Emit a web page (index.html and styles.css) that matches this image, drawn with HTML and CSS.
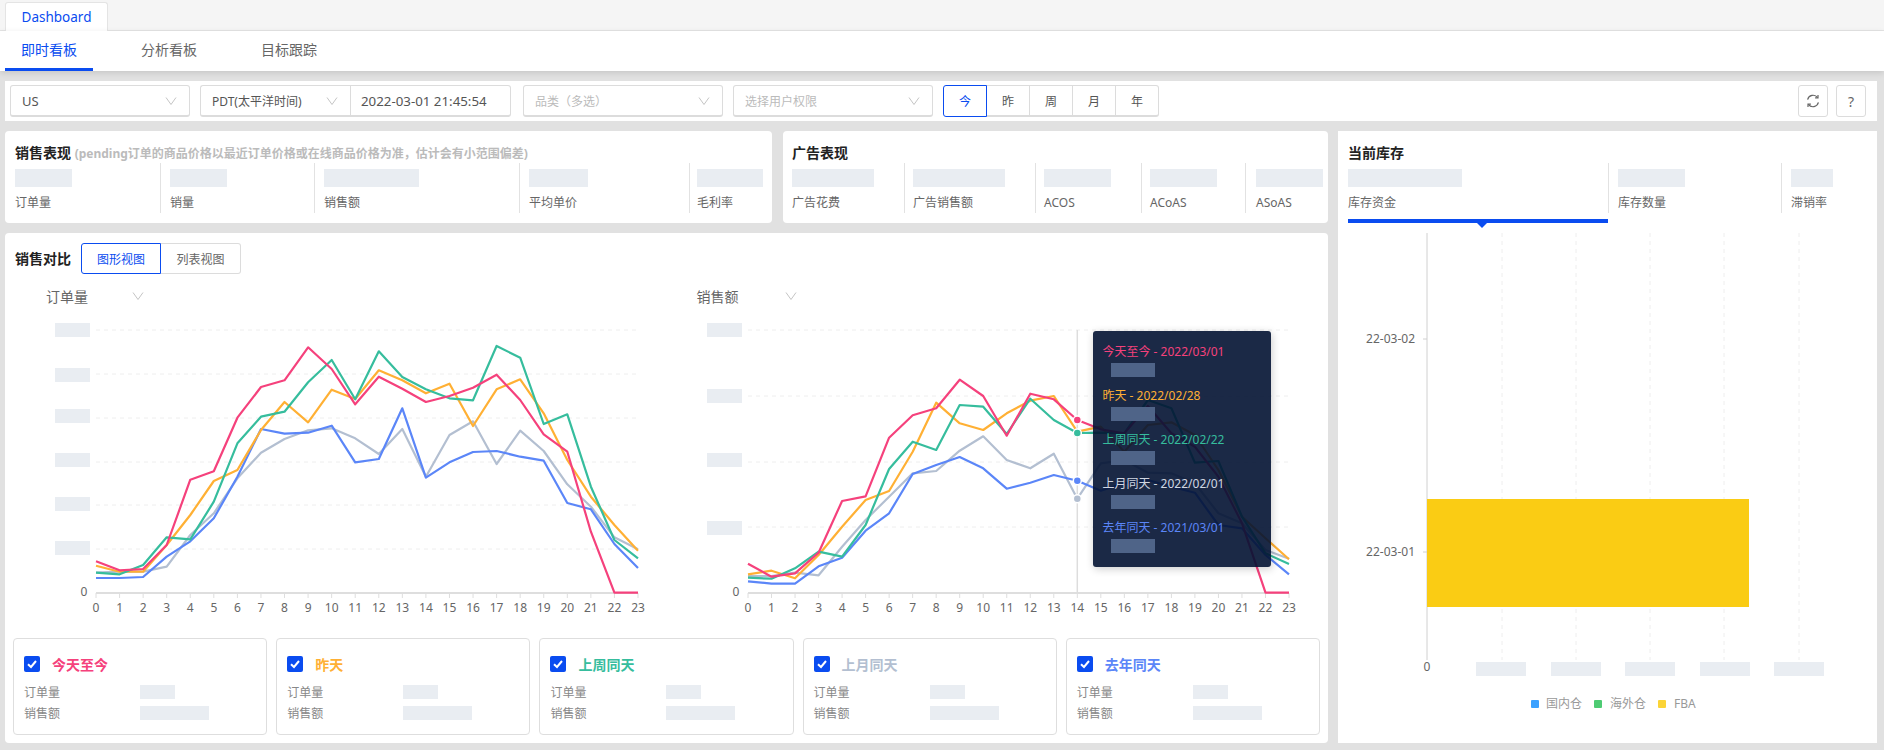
FILE: index.html
```html
<!DOCTYPE html>
<html lang="zh-CN">
<head>
  <meta charset="UTF-8" />
  <title>Dashboard</title>
  <link rel="stylesheet" href="styles.css">
</head>
<body>
  <div class="page-tabs">
    <div class="page-tab">Dashboard</div>
  </div>

  <nav class="board-tabs">
    <a class="board-tab active">即时看板</a>
    <a class="board-tab">分析看板</a>
    <a class="board-tab">目标跟踪</a>
  </nav>

  <div class="toolbar">
    <div class="select w-country">US<svg class="chevron" viewBox="0 0 12 8"><path d="M1 .5 6 7.5 11 .5"/></svg></div>
    <div class="date-group">
      <div class="select w-zone"><span class="small">PDT(太平洋时间)</span><svg class="chevron" viewBox="0 0 12 8"><path d="M1 .5 6 7.5 11 .5"/></svg></div>
      <div class="date-value">2022-03-01 21:45:54</div>
    </div>
    <div class="select w-filter placeholder">品类（多选）<svg class="chevron" viewBox="0 0 12 8"><path d="M1 .5 6 7.5 11 .5"/></svg></div>
    <div class="select w-filter placeholder">选择用户权限<svg class="chevron" viewBox="0 0 12 8"><path d="M1 .5 6 7.5 11 .5"/></svg></div>
    <div class="segments">
      <button class="segment active">今</button>
      <button class="segment">昨</button>
      <button class="segment">周</button>
      <button class="segment">月</button>
      <button class="segment">年</button>
    </div>
    <div class="tools">
      <button class="tool-btn" aria-label="刷新">
        <svg viewBox="0 0 14 14" width="14" height="14"><path d="M1.6 5.6A5.6 5.6 0 0 1 11.6 3.6M12.4 8.4A5.6 5.6 0 0 1 2.4 10.4"/><path d="M12 .9v2.9H9.1M2 13.1v-2.9h2.9"/></svg>
      </button>
      <button class="tool-btn">?</button>
    </div>
  </div>

  <main class="main">
    <div class="left-col">
      <div class="top-row">
        <section class="card sales-card">
          <h3 class="card-title">销售表现 <small>(pending订单的商品价格以最近订单价格或在线商品价格为准，估计会有小范围偏差)</small></h3>
          <div class="metrics sales-metrics">
            <div class="metric"><i class="blur" style="width:57px"></i><span>订单量</span></div>
            <div class="metric"><i class="blur" style="width:57px"></i><span>销量</span></div>
            <div class="metric"><i class="blur" style="width:95px"></i><span>销售额</span></div>
            <div class="metric"><i class="blur" style="width:59px"></i><span>平均单价</span></div>
            <div class="metric"><i class="blur" style="width:66px"></i><span>毛利率</span></div>
          </div>
        </section>
        <section class="card ads-card">
          <h3 class="card-title">广告表现</h3>
          <div class="metrics ads-metrics">
            <div class="metric"><i class="blur" style="width:82px"></i><span>广告花费</span></div>
            <div class="metric"><i class="blur" style="width:92px"></i><span>广告销售额</span></div>
            <div class="metric"><i class="blur" style="width:67px"></i><span>ACOS</span></div>
            <div class="metric"><i class="blur" style="width:67px"></i><span>ACoAS</span></div>
            <div class="metric"><i class="blur" style="width:67px"></i><span>ASoAS</span></div>
          </div>
        </section>
      </div>

      <section class="card compare-card">
        <div class="compare-head">
          <h3 class="card-title">销售对比</h3>
          <div class="view-switch">
            <button class="view-btn active">图形视图</button>
            <button class="view-btn">列表视图</button>
          </div>
        </div>

        <div class="charts">
          <div class="chart-pane orders-pane">
            <div class="chart-select">订单量<svg class="chevron" viewBox="0 0 12 8"><path d="M1 .5 6 7.5 11 .5"/></svg></div>
            <div class="chart-box" id="ordersChart"></div>
          </div>
          <div class="chart-pane revenue-pane">
            <div class="chart-select">销售额<svg class="chevron" viewBox="0 0 12 8"><path d="M1 .5 6 7.5 11 .5"/></svg></div>
            <div class="chart-box" id="revenueChart"></div>
            <div class="chart-tip">
              <div class="tip-row c-today">今天至今 - 2022/03/01<i></i></div>
              <div class="tip-row c-yesterday">昨天 - 2022/02/28<i></i></div>
              <div class="tip-row c-week">上周同天 - 2022/02/22<i></i></div>
              <div class="tip-row c-month">上月同天 - 2022/02/01<i></i></div>
              <div class="tip-row c-year">去年同天 - 2021/03/01<i></i></div>
            </div>
          </div>
        </div>

        <div class="legend-cards">
          <div class="legend-card">
            <div class="legend-name c-today"><span class="check"><svg viewBox="0 0 16 16"><path d="M4 8.2 7 11l5-6"/></svg></span>今天至今</div>
            <div class="legend-row"><span>订单量</span><i class="blur" style="width:35px"></i></div>
            <div class="legend-row"><span>销售额</span><i class="blur" style="width:69px"></i></div>
          </div>
          <div class="legend-card">
            <div class="legend-name c-yesterday"><span class="check"><svg viewBox="0 0 16 16"><path d="M4 8.2 7 11l5-6"/></svg></span>昨天</div>
            <div class="legend-row"><span>订单量</span><i class="blur" style="width:35px"></i></div>
            <div class="legend-row"><span>销售额</span><i class="blur" style="width:69px"></i></div>
          </div>
          <div class="legend-card">
            <div class="legend-name c-week"><span class="check"><svg viewBox="0 0 16 16"><path d="M4 8.2 7 11l5-6"/></svg></span>上周同天</div>
            <div class="legend-row"><span>订单量</span><i class="blur" style="width:35px"></i></div>
            <div class="legend-row"><span>销售额</span><i class="blur" style="width:69px"></i></div>
          </div>
          <div class="legend-card">
            <div class="legend-name c-month"><span class="check"><svg viewBox="0 0 16 16"><path d="M4 8.2 7 11l5-6"/></svg></span>上月同天</div>
            <div class="legend-row"><span>订单量</span><i class="blur" style="width:35px"></i></div>
            <div class="legend-row"><span>销售额</span><i class="blur" style="width:69px"></i></div>
          </div>
          <div class="legend-card">
            <div class="legend-name c-year"><span class="check"><svg viewBox="0 0 16 16"><path d="M4 8.2 7 11l5-6"/></svg></span>去年同天</div>
            <div class="legend-row"><span>订单量</span><i class="blur" style="width:35px"></i></div>
            <div class="legend-row"><span>销售额</span><i class="blur" style="width:69px"></i></div>
          </div>
        </div>
      </section>
    </div>

    <section class="card stock-card">
      <h3 class="card-title">当前库存</h3>
      <div class="metrics stock-metrics">
        <div class="metric"><i class="blur" style="width:114px"></i><span>库存资金</span></div>
        <div class="metric"><i class="blur" style="width:67px"></i><span>库存数量</span></div>
        <div class="metric"><i class="blur" style="width:42px"></i><span>滞销率</span></div>
      </div>
      <div class="stock-bar"></div>
      <svg class="stock-chart" viewBox="1338 228 539 515" width="539" height="515">
        <g class="v-grid">
          <path d="M1502 233V660M1576 233V660M1650 233V660M1724 233V660M1799 233V660"/>
        </g>
        <path class="y-axis" d="M1427 233V660M1423 339H1427M1423 552H1427"/>
        <rect x="1427" y="499" width="322" height="108" fill="#facc14"/>
        <text class="axis-text" x="1415" y="343" text-anchor="end">22-03-02</text>
        <text class="axis-text" x="1415" y="556" text-anchor="end">22-03-01</text>
        <text class="axis-text" x="1427" y="671" text-anchor="middle">0</text>
        <g fill="#e9edf2">
          <rect x="1476" y="662" width="50" height="14"/>
          <rect x="1551" y="662" width="50" height="14"/>
          <rect x="1625" y="662" width="50" height="14"/>
          <rect x="1700" y="662" width="50" height="14"/>
          <rect x="1774" y="662" width="50" height="14"/>
        </g>
        <rect x="1531" y="700" width="8" height="8" rx="1" fill="#3ba1ff"/>
        <text class="legend-text" x="1546" y="708">国内仓</text>
        <rect x="1594" y="700" width="8" height="8" rx="1" fill="#4ecb73"/>
        <text class="legend-text" x="1610" y="708">海外仓</text>
        <rect x="1658" y="700" width="8" height="8" rx="1" fill="#fbd437"/>
        <text class="legend-text" x="1674" y="708">FBA</text>
      </svg>
    </section>
  </main>

  <script src="charts.js"></script>
</body>
</html>
```

FILE: styles.css
```css
* {
  box-sizing: border-box;
}

body {
  margin: 0;
  background-color: #e1e1e1;
  color: #555;
  font-family: "Noto Sans", "Noto Sans CJK SC", sans-serif;
  font-size: 12px;
  width: 1884px;
  height: 750px;
  overflow: hidden;
}

button {
  font-family: inherit;
  cursor: pointer;
}

/* top tabs */
.page-tabs {
  height: 31px;
  padding: 2px 0 0 5px;
  background-color: #f5f5f5;
  border-bottom: 1px solid #e4e4e4;
}

.page-tab {
  width: 103px;
  height: 29px;
  line-height: 28px;
  text-align: center;
  font-size: 13.5px;
  color: #0a4cf0;
  background-color: #fff;
  border: 1px solid #e4e4e4;
  border-bottom: none;
  border-radius: 3px 3px 0 0;
}

.board-tabs {
  display: flex;
  height: 40px;
  padding-left: 5px;
  background-color: #fff;
  box-shadow: 0 2px 6px rgba(0, 0, 0, 0.12);
  position: relative;
}

.board-tab {
  width: 88px;
  margin-right: 32px;
  line-height: 37px;
  text-align: center;
  font-size: 14px;
  color: #666;
  border-bottom: 3px solid transparent;
}

.board-tab.active {
  color: #0a4cf0;
  border-bottom-color: #0a4cf0;
}

/* filter bar */
.toolbar {
  display: flex;
  align-items: center;
  gap: 10px;
  width: 1872px;
  height: 40px;
  margin: 10px 0 0 5px;
  padding: 0 11px 0 5px;
  background-color: #fff;
}

.select {
  display: flex;
  align-items: center;
  justify-content: space-between;
  height: 32px;
  padding: 0 12px 0 11px;
  font-size: 13px;
  color: #555;
  background-color: #fff;
  border: 1px solid #dcdcdc;
  border-bottom-width: 2px;
  border-radius: 3px;
}

.select .small {
  font-size: 12px;
}

.select.placeholder {
  color: #bbb;
  font-size: 12px;
}

.chevron {
  width: 12px;
  height: 8px;
  flex: none;
}

.chevron path {
  fill: none;
  stroke: #c4c4c4;
  stroke-width: 1;
}

.w-country {
  width: 180px;
}

.w-zone {
  width: 150px;
  border-right: none;
  border-radius: 3px 0 0 3px;
}

.w-filter {
  width: 200px;
}

.date-group {
  display: flex;
  margin-right: 2px;
}

.date-value {
  width: 161px;
  height: 32px;
  padding-left: 10px;
  line-height: 31px;
  font-size: 13.3px;
  color: #555;
  border: 1px solid #dcdcdc;
  border-bottom-width: 2px;
  border-radius: 0 3px 3px 0;
}

.segments {
  display: flex;
  height: 32px;
}

.segment {
  width: 44px;
  height: 32px;
  padding: 0;
  margin-left: -1px;
  font-size: 12px;
  color: #555;
  background-color: #fff;
  border: 1px solid #dcdcdc;
  border-bottom-width: 2px;
}

.segment:first-child {
  margin-left: 0;
  border-radius: 3px 0 0 3px;
}

.segment:last-child {
  border-radius: 0 3px 3px 0;
}

.segment.active {
  position: relative;
  color: #0a4cf0;
  border: 1px solid #0a4cf0;
}

.tools {
  display: flex;
  gap: 8px;
  margin-left: auto;
}

.tool-btn {
  display: flex;
  align-items: center;
  justify-content: center;
  width: 30px;
  height: 32px;
  padding: 0;
  font-size: 14px;
  color: #666;
  background-color: #fff;
  border: 1px solid #dcdcdc;
  border-radius: 3px;
}

.tool-btn path {
  fill: none;
  stroke: #666;
  stroke-width: 1.2;
}

/* layout */
.main {
  display: flex;
  gap: 10px;
  margin: 10px 0 0 5px;
  height: 612px;
}

.left-col {
  display: flex;
  flex-direction: column;
  gap: 10px;
  width: 1323px;
}

.top-row {
  display: flex;
  gap: 11px;
}

.card {
  background-color: #fff;
  border-radius: 4px;
}

.card-title {
  margin: 0;
  height: 22px;
  line-height: 22px;
  font-size: 14px;
  font-weight: 700;
  color: #222;
}

.card-title small {
  font-size: 12px;
  color: #bbb;
}

.sales-card,
.ads-card {
  height: 92px;
  padding: 11px 9px 0 10px;
}

.sales-card {
  width: 767px;
}

.ads-card {
  width: 545px;
  padding-left: 9px;
}

.metrics {
  display: grid;
  height: 50px;
  margin-top: -1px;
}

.sales-metrics {
  grid-template-columns: 145px 154px 205px 170px 1fr;
}

.ads-metrics {
  grid-template-columns: 112px 131px 106px 104px 1fr;
}

.stock-metrics {
  grid-template-columns: 260px 173px 1fr;
}

.metric {
  padding: 6px 0 0 9px;
  border-left: 1px solid #e2e2e2;
}

.metric:first-child {
  padding-left: 0;
  border-left: none;
}

.sales-metrics .metric:last-child {
  padding-left: 7px;
}

.ads-metrics .metric {
  padding-left: 8px;
}

.ads-metrics .metric:first-child {
  padding-left: 0;
}

.ads-metrics .metric:last-child {
  padding-left: 10px;
}

.metric span {
  display: block;
  margin-top: 7px;
  line-height: 18px;
  color: #666;
}

.blur {
  display: block;
  height: 18px;
  background-color: #e9edf2;
}

/* stock card */
.stock-card {
  width: 539px;
  height: 612px;
  padding: 11px 10px 0;
  border-radius: 0;
}

.stock-bar {
  position: relative;
  width: 260px;
  height: 4px;
  margin-top: 6px;
  background-color: #0a4cf0;
}

.stock-bar::after {
  content: "";
  position: absolute;
  left: 129px;
  top: 4px;
  border-left: 5px solid transparent;
  border-right: 5px solid transparent;
  border-top: 5px solid #0a4cf0;
}

.stock-chart {
  display: block;
  margin: 5px 0 0 -10px;
}

.v-grid path {
  fill: none;
  stroke: #eee;
  stroke-dasharray: 4 4;
}

.y-axis {
  fill: none;
  stroke: #d0d0d0;
}

.axis-text {
  font-size: 12px;
  fill: #666;
}

.legend-text {
  font-size: 12px;
  fill: #999;
}

/* comparison card */
.compare-card {
  height: 510px;
  padding: 10px 8px 8px;
}

.compare-head {
  display: flex;
  align-items: center;
  gap: 10px;
  padding-left: 2px;
}

.view-switch {
  display: flex;
}

.view-btn {
  width: 80px;
  height: 31px;
  padding: 0;
  font-size: 12px;
  color: #666;
  background-color: #fff;
  border: 1px solid #dcdcdc;
  border-left: none;
  border-radius: 0 3px 3px 0;
}

.view-btn.active {
  color: #0a4cf0;
  border: 1px solid #0a4cf0;
  border-radius: 3px 0 0 3px;
}

.charts {
  display: flex;
  height: 353px;
  margin-top: 11px;
}

.chart-pane {
  position: relative;
  width: 653.5px;
}

.chart-select {
  display: flex;
  align-items: center;
  justify-content: space-between;
  height: 22px;
  color: #666;
  font-size: 14px;
}

.orders-pane .chart-select {
  width: 98px;
  margin-left: 33px;
}

.revenue-pane .chart-select {
  width: 100px;
  margin-left: 30px;
}

.chart-box svg {
  display: block;
  margin-top: 3px;
}

.chart-box .grid {
  fill: none;
  stroke: #eee;
  stroke-dasharray: 4 4;
}

.chart-box .axis {
  fill: none;
  stroke: #dedede;
  stroke-width: 2;
}

.chart-box .ticks {
  fill: none;
  stroke: #dedede;
}

.chart-box .pointer {
  stroke: #ddd;
  stroke-width: 1.5;
}

.chart-box text {
  font-size: 12px;
  fill: #666;
  text-anchor: middle;
}

.chart-box .line {
  fill: none;
  stroke-width: 2.2;
  stroke-linejoin: round;
}

.chart-tip {
  position: absolute;
  left: 426px;
  top: 46px;
  width: 178px;
  height: 236px;
  padding: 10px 10px 0;
  background-color: rgba(2, 18, 50, 0.9);
  border-radius: 3px;
  box-shadow: 1px 2px 8px rgba(0, 0, 0, 0.2);
}

.tip-row {
  height: 44px;
  line-height: 22px;
  font-size: 12px;
  white-space: nowrap;
}

.tip-row i {
  display: block;
  width: 44px;
  height: 14px;
  margin-left: 8px;
  background-color: #4f6488;
}

/* series colours */
.c-today {
  color: #f5417c;
}

.c-yesterday {
  color: #ffb034;
}

.c-week {
  color: #36bd9d;
}

.c-month {
  color: #b3bfd1;
}

.c-year {
  color: #5b86f8;
}

.tip-row.c-month {
  color: #cfd6e2;
}

/* legend cards */
.legend-cards {
  display: grid;
  grid-template-columns: repeat(5, 1fr);
  gap: 9px;
  margin-top: 0;
}

.legend-card {
  height: 97px;
  padding: 14px 10px 0;
  border: 1px solid #dedede;
  border-radius: 4px;
}

.legend-name {
  display: flex;
  align-items: center;
  gap: 12px;
  height: 22px;
  margin-bottom: 6px;
  font-size: 14px;
  font-weight: 700;
}

.check {
  width: 16px;
  height: 16px;
  background-color: #0a4cf0;
  border-radius: 2px;
}

.check svg {
  display: block;
  width: 16px;
  height: 16px;
}

.check path {
  fill: none;
  stroke: #fff;
  stroke-width: 2;
}

.legend-row {
  display: flex;
  align-items: center;
  height: 21px;
  color: #888;
}

.legend-row span {
  width: 116px;
}

.legend-row .blur {
  height: 14px;
}
```

FILE: charts.js
```js
const SERIES_COLORS = {
  today: "#f5417c",
  yesterday: "#ffb034",
  week: "#36bd9d",
  month: "#b3bfd1",
  year: "#5b86f8"
};

// both charts were read with y = value / 3 + offset
const ordersChart = {
  el: "ordersChart",
  left: 83,
  right: 625,
  offset: 230,
  zero: 593,
  grid: [330, 374, 418, 462, 505, 549],
  labels: [323, 368, 409, 453, 497, 541],
  labelX: 42,
  series: {
    month: [1028,1025,1025,1010,915,850,745,668,627,601,595,625,672,597,740,615,574,702,602,663,763,830,922,958],
    year: [1044,1044,1041,980,934,865,740,597,611,608,587,697,687,535,743,697,666,663,680,692,819,838,942,1014],
    yesterday: [1007,1025,1025,945,855,753,720,600,516,577,479,507,421,451,490,461,588,478,448,550,690,800,885,962],
    week: [1028,1033,1005,922,928,815,640,560,545,457,390,508,364,441,478,505,511,348,383,582,553,770,930,985],
    today: [994,1021,1017,945,749,724,563,471,451,352,417,523,440,476,516,498,473,434,510,613,665,905,1088,1088]
  }
};

const revenueChart = {
  el: "revenueChart",
  left: 81,
  right: 622,
  offset: 270,
  zero: 593,
  grid: [330, 396, 462, 527],
  labels: [323, 389, 453, 521],
  labelX: 40,
  pointer: 14,
  series: {
    month: [918,918,908,916,830,750,680,610,603,542,499,570,595,551,686,580,570,608,610,640,730,760,840,866],
    year: [934,941,941,889,863,782,730,612,585,561,595,656,638,615,632,662,640,630,650,668,765,775,855,913],
    yesterday: [913,902,925,855,770,690,663,545,398,460,480,430,392,378,485,470,545,465,457,495,600,740,805,868],
    week: [923,926,895,845,860,765,597,515,540,405,410,492,386,450,489,488,490,390,415,578,573,740,850,882],
    today: [881,920,910,848,693,679,503,436,415,329,378,497,371,388,450,478,490,408,490,530,620,760,968,968]
  }
};

function drawChart(chart) {
  const top = 310; // svg starts at this page row
  const step = (chart.right - chart.left) / 23;
  const xAt = (i) => chart.left + i * step;
  const yAt = (v) => v / 3 + chart.offset - top;
  const zero = chart.zero - top;
  let html = "";

  chart.grid.forEach((y) => {
    html += `<path class="grid" d="M${chart.left} ${y - top}H${chart.right}"/>`;
  });
  chart.labels.forEach((y) => {
    html += `<rect x="${chart.labelX}" y="${y - top}" width="35" height="14" fill="#e9edf2"/>`;
  });

  let ticks = "";
  for (let i = 0; i < 24; i++) {
    ticks += `M${xAt(i)} ${zero}v5`;
    html += `<text x="${xAt(i)}" y="${zero + 19}">${i}</text>`;
  }
  html += `<path class="ticks" d="${ticks}"/>`;
  html += `<path class="axis" d="M${chart.left} ${zero}H${chart.right}"/>`;
  html += `<text x="${chart.left - 12}" y="${zero + 3}">0</text>`;

  if (chart.pointer !== undefined) {
    const px = xAt(chart.pointer);
    html += `<path class="pointer" d="M${px} ${chart.grid[0] - top}V${zero}"/>`;
  }

  Object.keys(chart.series).forEach((name) => {
    const points = chart.series[name].map((v, i) => `${xAt(i).toFixed(1)},${yAt(v).toFixed(1)}`).join(" ");
    html += `<polyline class="line" stroke="${SERIES_COLORS[name]}" points="${points}"/>`;
  });

  if (chart.pointer !== undefined) {
    Object.keys(chart.series).forEach((name) => {
      if (name === "yesterday") return;
      const v = chart.series[name][chart.pointer];
      html += `<circle cx="${xAt(chart.pointer)}" cy="${yAt(v)}" r="4" fill="${SERIES_COLORS[name]}" stroke="#fff" stroke-width="1.5"/>`;
    });
  }

  document.getElementById(chart.el).innerHTML =
    `<svg width="653" height="328" viewBox="0 0 653 328">${html}</svg>`;
}

drawChart(ordersChart);
drawChart(revenueChart);
```
